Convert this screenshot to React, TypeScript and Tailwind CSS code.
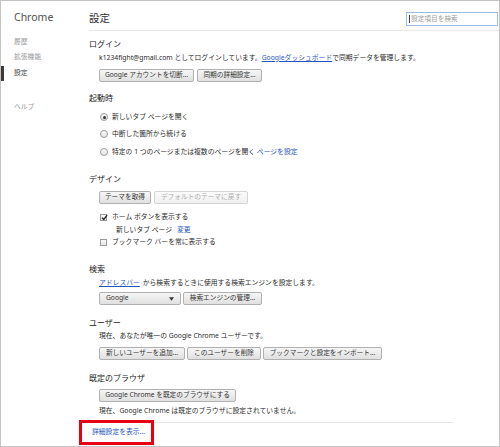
import React from "react";

const Btn = ({ children, w, disabled }: { children: React.ReactNode; w: string; disabled?: boolean }) => (
  <div
    className={`${w} h-[13px] shrink-0 flex items-center justify-center rounded-[2px] border text-[6.7px] leading-none whitespace-nowrap ${
      disabled
        ? "border-[#d4d4d4] bg-gradient-to-b from-[#fbfbfb] to-[#f0f0f0] text-[#adadad]"
        : "border-[#b0b0b0] bg-gradient-to-b from-[#f6f6f6] to-[#e0e0e0] text-[#333]"
    }`}
  >
    {children}
  </div>
);

const H = ({ children, mt }: { children: React.ReactNode; mt: string }) => (
  <div className={`${mt} h-[12px] flex items-center text-[8px] text-[#222] leading-none`}>{children}</div>
);

const Radio = ({ checked, children, mt }: { checked?: boolean; children: React.ReactNode; mt: string }) => (
  <div className={`${mt} h-[12px] flex items-center pl-[11px]`}>
    <div className="w-[8px] h-[8px] rounded-full border border-[#9a9a9a] bg-gradient-to-b from-[#fafafa] to-[#e4e4e4] flex items-center justify-center">
      {checked && <div className="w-[3px] h-[3px] rounded-full bg-[#333]" />}
    </div>
    <span className="ml-[4px] text-[6.8px] text-[#2a2a2a] leading-none whitespace-nowrap">{children}</span>
  </div>
);

const Check = ({ checked, children, mt }: { checked?: boolean; children: React.ReactNode; mt: string }) => (
  <div className={`${mt} h-[12px] flex items-center pl-[11px]`}>
    <div className="relative w-[7px] h-[7px] border border-[#9a9a9a] bg-gradient-to-b from-[#fafafa] to-[#e4e4e4]">
      {checked && (
        <svg viewBox="0 0 8 8" className="absolute left-[0px] top-[-1px] w-[7px] h-[7px]">
          <path d="M1.2 4.2 L3.2 6.2 L7 1.2" fill="none" stroke="#222" strokeWidth="1.5" />
        </svg>
      )}
    </div>
    <span className="ml-[5px] text-[6.8px] text-[#2a2a2a] leading-none whitespace-nowrap">{children}</span>
  </div>
);

const Text = ({ children, mt }: { children: React.ReactNode; mt: string }) => (
  <div className={`${mt} h-[10px] flex items-center pl-[10px] text-[6.8px] text-[#2a2a2a] leading-none whitespace-nowrap`}>
    {children}
  </div>
);

const Link = ({ children, u = true }: { children: React.ReactNode; u?: boolean }) => (
  <span className={`text-[#1f55c0] ${u ? "underline" : ""}`}>{children}</span>
);

export default function App() {
  return (
    <div className="w-[500px] h-[447px] border border-[#c4c4c4] bg-white flex overflow-hidden relative font-['Noto_Sans','Noto_Sans_CJK_JP',sans-serif]">
      {/* Sidebar */}
      <aside className="w-[88px] shrink-0 relative">
        <div className="mt-[9px] pl-[13px] h-[14px] flex items-center text-[10.5px] text-[#505050] leading-none">Chrome</div>
        <div className="mt-[13px] pl-[13px] h-[10px] flex items-center text-[6.8px] text-[#9a9a9a] leading-none">履歴</div>
        <div className="mt-[5px] pl-[13px] h-[10px] flex items-center text-[6.8px] text-[#9a9a9a] leading-none">拡張機能</div>
        <div className="mt-[4px] h-[15px] flex items-center">
          <div className="w-[4px] h-[15px] -ml-[1px] bg-[#3a3a3a]" />
          <span className="pl-[10px] text-[6.8px] text-[#444] leading-none">設定</span>
        </div>
        <div className="mt-[21px] pl-[13px] h-[10px] flex items-center text-[6.8px] text-[#9a9a9a] leading-none">ヘルプ</div>
      </aside>

      {/* Main */}
      <main className="flex-1 flex flex-col">
        <header className="h-[30px] shrink-0 border-b border-[#e8e8e8] flex items-start justify-between pr-[1px]">
          <h1 className="mt-[10px] h-[14px] flex items-center text-[10.5px] text-[#303030] leading-none font-normal">設定</h1>
          <div className="mt-[11px] w-[92px] h-[14px] border border-[#9bbbe4] flex items-center pl-[2px] text-[6.7px] text-[#a0a0a0] leading-none">
            <span className="w-[1px] h-[8px] bg-[#444] mr-[1px]" />
            設定項目を検索
          </div>
        </header>

        <div className="flex flex-col">
          {/* ログイン */}
          <H mt="mt-[7px]">ログイン</H>
          <Text mt="mt-[3px]">
            k1234fight@gmail.com としてログインしています。
            <Link>Googleダッシュボード</Link>で同期データを管理します。
          </Text>
          <div className="mt-[6px] pl-[10px] flex gap-[3px]">
            <Btn w="w-[95px]">Google アカウントを切断...</Btn>
            <Btn w="w-[65px]">同期の詳細設定...</Btn>
          </div>

          {/* 起動時 */}
          <H mt="mt-[10px]">起動時</H>
          <Radio checked mt="mt-[7px]">新しいタブ ページを開く</Radio>
          <Radio mt="mt-[5px]">中断した箇所から続ける</Radio>
          <Radio mt="mt-[6px]">
            特定の 1 つのページまたは複数のページを開く <Link u={false}>ページを設定</Link>
          </Radio>

          {/* デザイン */}
          <H mt="mt-[15px]">デザイン</H>
          <div className="mt-[6px] pl-[10px] flex gap-[3px]">
            <Btn w="w-[52px]">テーマを取得</Btn>
            <Btn w="w-[94px]" disabled>
              デフォルトのテーマに戻す
            </Btn>
          </div>
          <Check checked mt="mt-[7px]">ホーム ボタンを表示する</Check>
          <div className="mt-[1px] h-[12px] flex items-center pl-[27px] text-[6.8px] text-[#2a2a2a] leading-none">
            新しいタブ ページ<span className="ml-[5px]"><Link u={false}>変更</Link></span>
          </div>
          <Check mt="mt-[0px]">ブックマーク バーを常に表示する</Check>

          {/* 検索 */}
          <H mt="mt-[15px]">検索</H>
          <Text mt="mt-[3px]">
            <Link>アドレスバー</Link>
            <span className="ml-[3px]">から検索するときに使用する検索エンジンを設定します。</span>
          </Text>
          <div className="mt-[4px] pl-[10px] flex gap-[2px]">
            <div className="w-[82px] h-[13px] flex items-center justify-between rounded-[2px] border border-[#b0b0b0] bg-gradient-to-b from-[#f6f6f6] to-[#e0e0e0] px-[6px] text-[6.7px] text-[#333] leading-none">
              <span>Google</span>
              <svg viewBox="0 0 6 4" className="w-[5px] h-[4px]">
                <path d="M0 0 L6 0 L3 4 Z" fill="#333" />
              </svg>
            </div>
            <Btn w="w-[79px]">検索エンジンの管理...</Btn>
          </div>

          {/* ユーザー */}
          <H mt="mt-[12px]">ユーザー</H>
          <Text mt="mt-[2px]">現在、あなたが唯一の Google Chrome ユーザーです。</Text>
          <div className="mt-[6px] pl-[10px] flex gap-[2px]">
            <Btn w="w-[86px]">新しいユーザーを追加...</Btn>
            <Btn w="w-[74px]">このユーザーを削除</Btn>
            <Btn w="w-[119px]">ブックマークと設定をインポート...</Btn>
          </div>

          {/* 既定のブラウザ */}
          <H mt="mt-[12px]">既定のブラウザ</H>
          <div className="mt-[5px] pl-[10px] flex">
            <Btn w="w-[137px]">Google Chrome を既定のブラウザにする</Btn>
          </div>
          <Text mt="mt-[4px]">現在、Google Chrome は既定のブラウザに設定されていません。</Text>

          {/* footer */}
          <div className="mt-[6px] -ml-[9px] w-[373px] border-t border-[#e4e4e4] h-[20px] flex items-center pl-[12px]">
            <span className="text-[6.8px] text-[#1f55c0] leading-none">詳細設定を表示...</span>
          </div>
        </div>
      </main>

      {/* red annotation box */}
      <div className="absolute left-[78px] top-[419px] w-[75px] h-[25px] border-[3px] border-[#e60012]" />
    </div>
  );
}
